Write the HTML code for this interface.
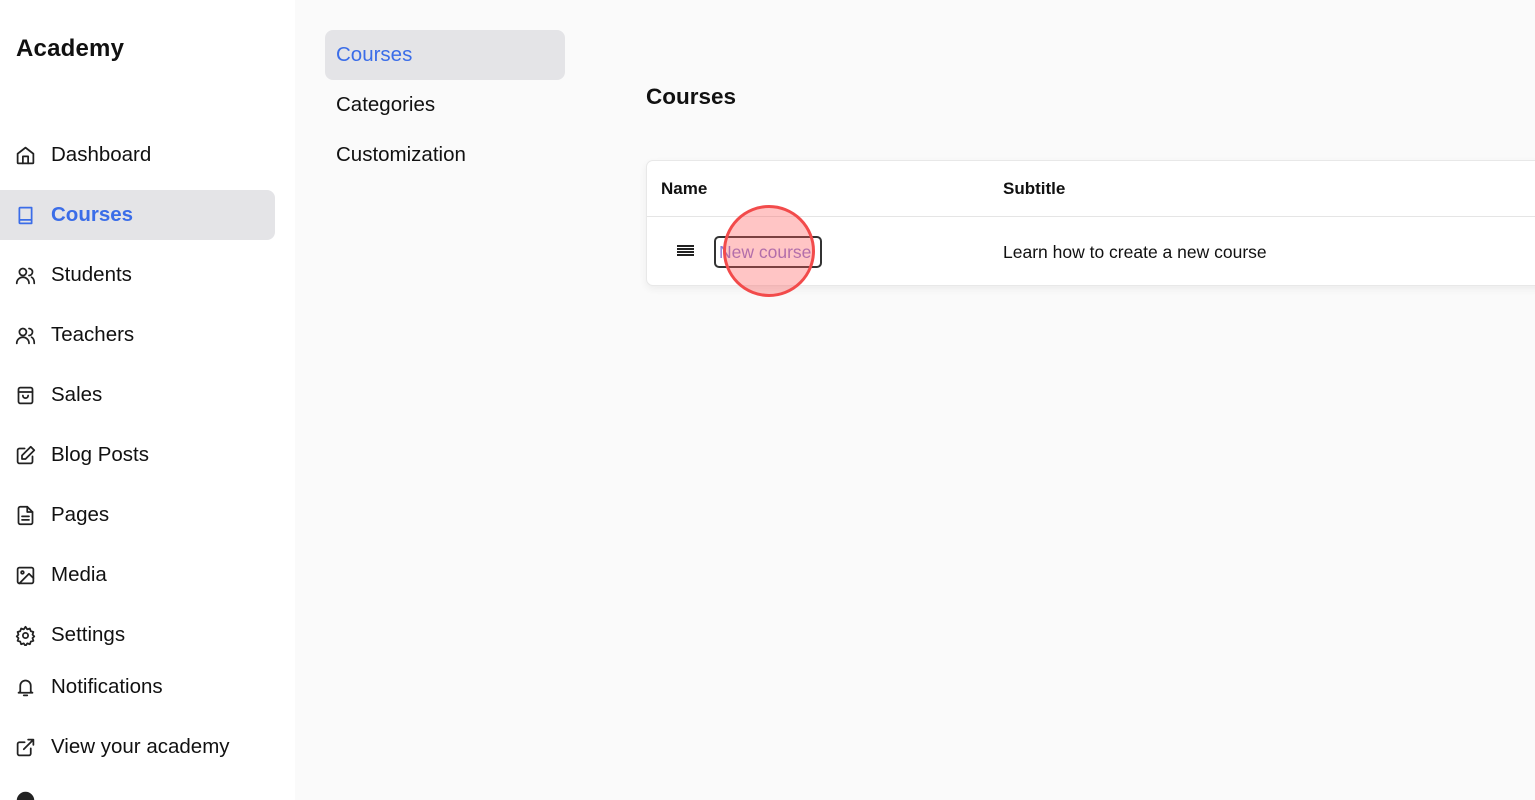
<!DOCTYPE html>
<html><head><style>
*{margin:0;padding:0;box-sizing:border-box}
html,body{width:1535px;height:800px;overflow:hidden}
body{background:#fafafa;font-family:"Liberation Sans",sans-serif;color:#111;position:relative}
.side{position:absolute;left:0;top:0;width:295px;height:800px;background:#fff;overflow:hidden}
.logo{position:absolute;left:16px;top:35px;font-size:24px;font-weight:bold;letter-spacing:.2px}
.item{position:absolute;left:0;width:275px;height:50px;display:flex;align-items:center;padding-left:15px;font-size:20.5px;border-radius:0 8px 8px 0}
.item svg{width:21px;height:21px;margin-right:15px;fill:none;stroke:#222;stroke-width:2;stroke-linecap:round;stroke-linejoin:round}
.act{background:#e4e4e7;color:#3b6de8;font-weight:bold}
.act svg{stroke:#3b6de8}
.sub{position:absolute;left:325px;width:240px;height:50px;display:flex;align-items:center;padding-left:11px;font-size:20.5px;border-radius:8px}
.subact{background:#e4e4e7;color:#3b6de8}
h2{position:absolute;left:646px;top:84px;font-size:22.5px;font-weight:bold}
.card{position:absolute;left:646px;top:160px;width:900px;height:126px;background:#fff;border:1px solid #e8e8e8;border-radius:7px;box-shadow:0 3px 8px rgba(0,0,0,.06)}
.hd{position:absolute;top:0;left:0;right:0;height:56px;border-bottom:1px solid #e5e5e5;font-size:17px;font-weight:bold}
.hd span{position:absolute;top:18px}
.row span{position:absolute;font-size:17.5px}
.hb{position:absolute;left:30px;width:17px;height:2px;background:#222}
</style></head><body>
<div class="side">
<div class="logo">Academy</div>
<div class="item" style="top:130px"><svg viewBox="0 0 24 24"><path d="M3 10l9-7 9 7v10a1 1 0 0 1-1 1H4a1 1 0 0 1-1-1z"/><path d="M9 21v-8h6v8"/></svg>Dashboard</div>
<div class="item act" style="top:190px"><svg viewBox="0 0 24 24"><path d="M5 4a1 1 0 0 1 1-1h13v18H6a1 1 0 0 1-1-1z"/><path d="M5 17h14"/></svg>Courses</div>
<div class="item" style="top:250px"><svg viewBox="0 0 24 24"><circle cx="9" cy="8" r="4"/><path d="M2 21c0-4 3-7 7-7s7 3 7 7M16 4a4 4 0 0 1 0 8M19 14c2 1 3 4 3 7"/></svg>Students</div>
<div class="item" style="top:310px"><svg viewBox="0 0 24 24"><circle cx="9" cy="8" r="4"/><path d="M2 21c0-4 3-7 7-7s7 3 7 7M16 4a4 4 0 0 1 0 8M19 14c2 1 3 4 3 7"/></svg>Teachers</div>
<div class="item" style="top:370px"><svg viewBox="0 0 24 24"><rect x="4" y="3" width="16" height="18" rx="2"/><path d="M4 8h16M9 12a3 3 0 0 0 6 0"/></svg>Sales</div>
<div class="item" style="top:430px"><svg viewBox="0 0 24 24"><path d="M11 4H5a2 2 0 0 0-2 2v13a2 2 0 0 0 2 2h13a2 2 0 0 0 2-2v-6"/><path d="M18 2l4 4-10 10H8v-4z"/></svg>Blog Posts</div>
<div class="item" style="top:490px"><svg viewBox="0 0 24 24"><path d="M14 2H6a2 2 0 0 0-2 2v16a2 2 0 0 0 2 2h12a2 2 0 0 0 2-2V8z"/><path d="M14 2v6h6M8 13h8M8 17h8"/></svg>Pages</div>
<div class="item" style="top:550px"><svg viewBox="0 0 24 24"><rect x="3" y="3" width="18" height="18" rx="2"/><circle cx="8.5" cy="8.5" r="1.5"/><path d="M21 15l-5-5L5 21"/></svg>Media</div>
<div class="item" style="top:610px"><svg viewBox="0 0 24 24"><circle cx="12" cy="12" r="3"/><path d="M12 2l2 3 3-1 1 3 3 1-1 3 2 2-2 2 1 3-3 1-1 3-3-1-2 3-2-3-3 1-1-3-3-1 1-3-2-2 2-2-1-3 3-1 1-3 3 1z"/></svg>Settings</div>
<div class="item" style="top:662px"><svg viewBox="0 0 24 24"><path d="M6 17V10a6 6 0 0 1 12 0v7l2 1H4z"/><path d="M10 21h4"/></svg>Notifications</div>
<div class="item" style="top:722px"><svg viewBox="0 0 24 24"><path d="M18 13v6a2 2 0 0 1-2 2H5a2 2 0 0 1-2-2V8a2 2 0 0 1 2-2h6M15 3h6v6M10 14L21 3"/></svg>View your academy</div>
<div class="item" style="top:775px;height:40px"><svg viewBox="0 0 24 24" style="margin-top:10px"><circle cx="12" cy="12" r="9" fill="#222"/></svg></div>
</div>
<div class="sub subact" style="top:30px">Courses</div>
<div class="sub" style="top:80px">Categories</div>
<div class="sub" style="top:130px">Customization</div>
<h2>Courses</h2>
<div class="card">
<div class="hd"><span style="left:14px">Name</span><span style="left:356px">Subtitle</span></div>
<div class="row">
<span class="hb" style="top:84px"></span><span class="hb" style="top:87px"></span><span class="hb" style="top:90px"></span><span class="hb" style="top:93px"></span>
<span style="left:67px;top:75px;width:108px;height:32px;border:2px solid #333;border-radius:5px"></span>
<span style="left:72px;top:81px;color:#8a7ad6">New course</span>
<span style="left:356px;top:81px">Learn how to create a new course</span>
<span style="left:76px;top:44px;width:92px;height:92px;border-radius:50%;background:rgba(255,90,90,.35);border:3px solid #f24b4b"></span>
</div>
</div>
</body></html>
